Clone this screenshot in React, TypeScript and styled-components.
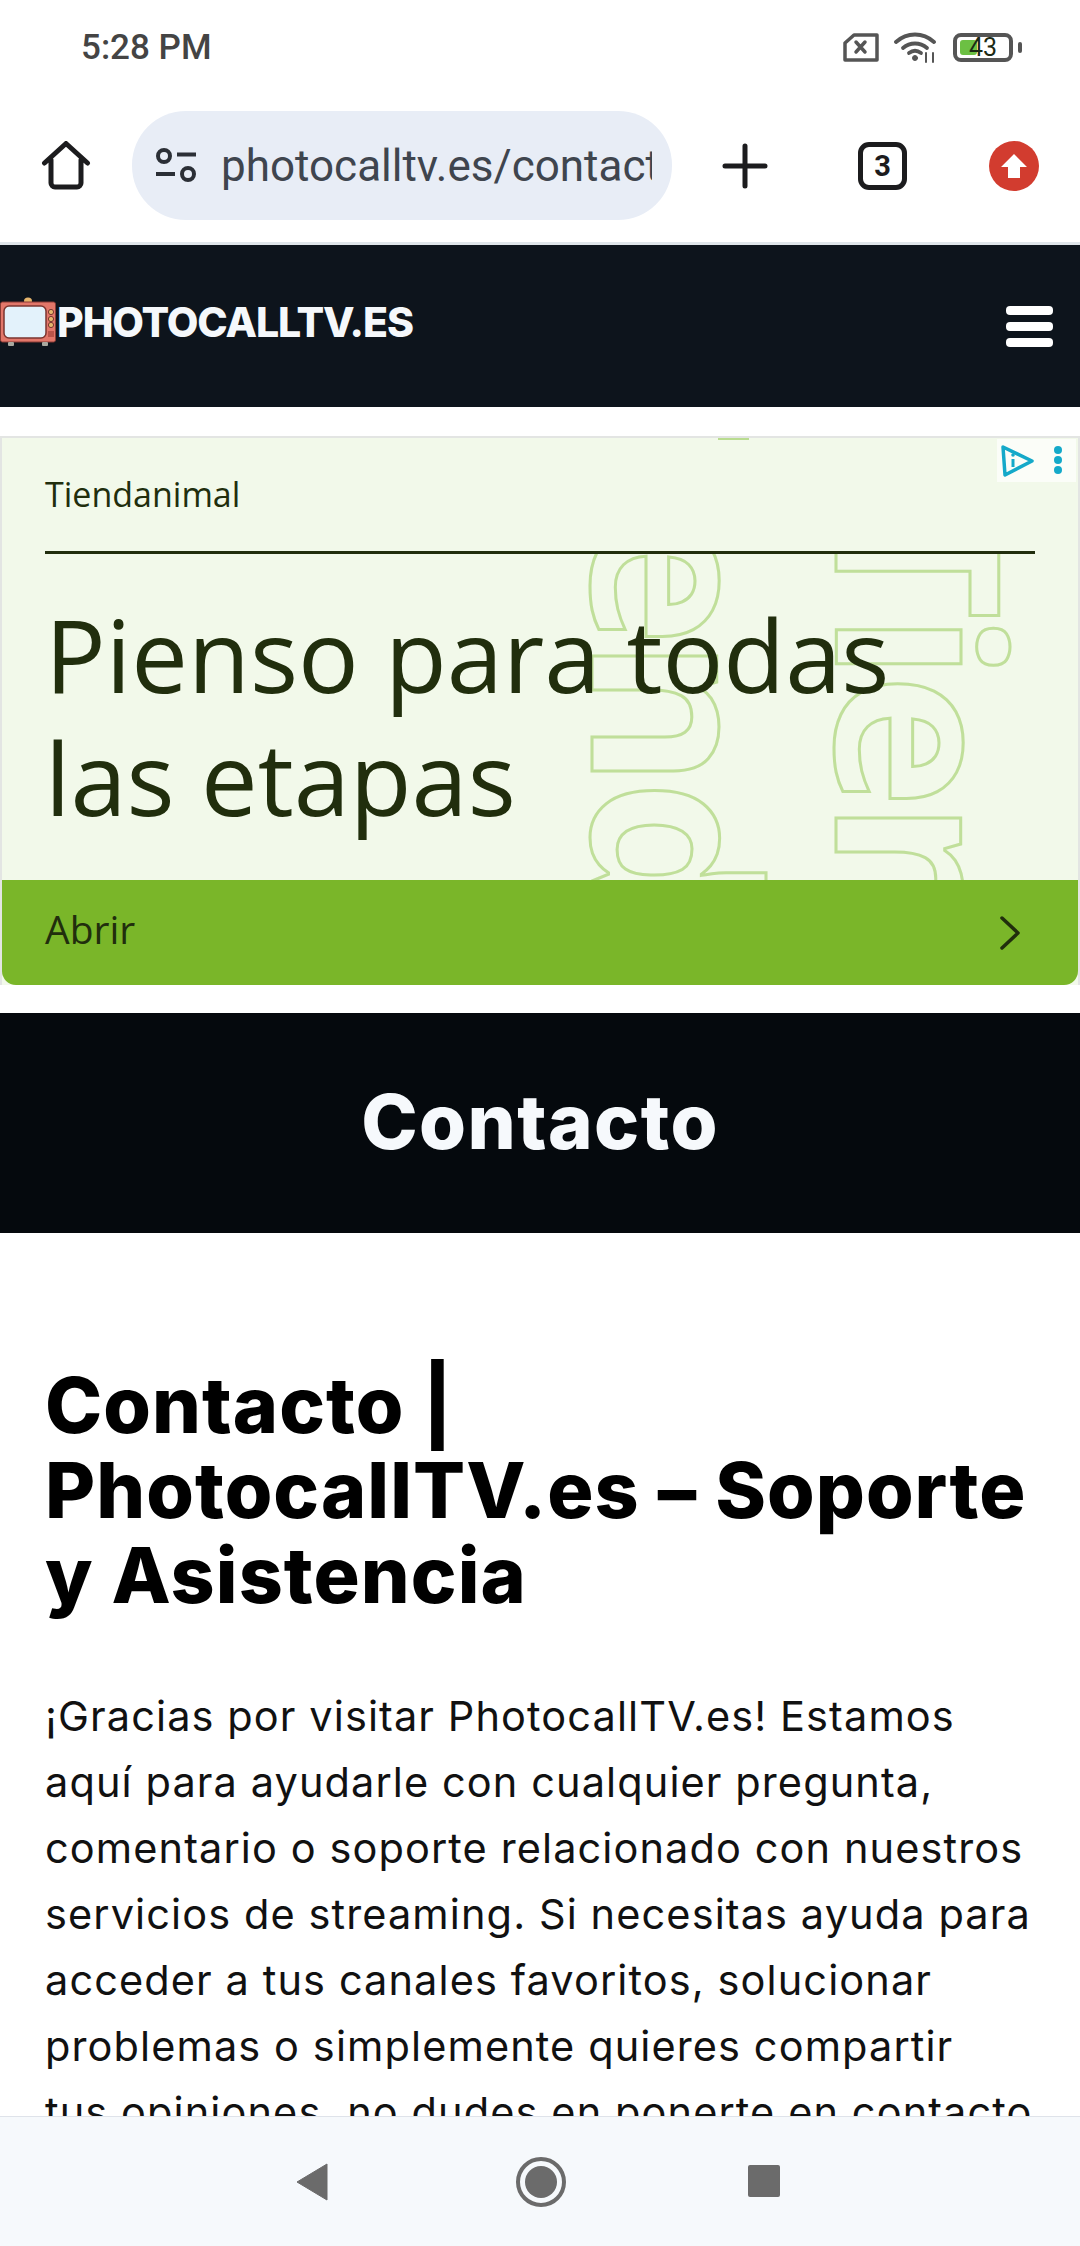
import styled, { createGlobalStyle } from 'styled-components';

const GlobalStyle = createGlobalStyle`
  html, body {
    margin: 0;
    padding: 0;
    background: #fff;
  }
  * {
    box-sizing: border-box;
  }
`;

const Screen = styled.div`
  width: 1080px;
  height: 2246px;
  display: flex;
  flex-direction: column;
  overflow: hidden;
  background: #fff;
  font-family: Inter, 'Liberation Sans', sans-serif;
`;

const StatusBar = styled.div`
  height: 96px;
  flex: none;
  display: flex;
  align-items: flex-start;
  justify-content: space-between;
  padding: 30px 59px 0 81px;
`;

const Time = styled.span`
  font-family: Roboto, sans-serif;
  font-weight: 500;
  font-size: 35px;
  line-height: 36px;
  color: #444;
`;

const StatusIcons = styled.div`
  display: flex;
  align-items: center;
  gap: 15px;
  margin-top: 2px;
`;

const Battery = styled.div`
  position: relative;
  width: 60px;
  height: 29px;
  border: 4px solid #555;
  border-radius: 8px;
  font-family: Roboto, sans-serif;
  font-size: 25px;
  line-height: 21px;
  color: #1c2a14;
  text-align: right;
  padding-right: 12px;
  &::before {
    content: '';
    position: absolute;
    left: 3px;
    top: 3px;
    width: 17px;
    height: 15px;
    border-radius: 3px;
    background: #6cc043;
  }
  &::after {
    content: '';
    position: absolute;
    right: -13px;
    top: 5px;
    width: 4px;
    height: 11px;
    border-radius: 2px;
    background: #555;
  }
  span {
    position: relative;
  }
`;

const BatteryWrap = styled.div`
  margin-right: 8px;
`;

const BrowserBar = styled.div`
  height: 149px;
  flex: none;
  display: flex;
  align-items: flex-start;
  padding: 15px 42px 0 40px;
  border-bottom: 3px solid #dfe5ea;
`;

const HomeButton = styled.div`
  width: 52px;
  height: 50px;
  margin-top: 30px;
  flex: none;
`;

const UrlPill = styled.div`
  width: 540px;
  height: 109px;
  margin-left: 40px;
  flex: none;
  display: flex;
  align-items: center;
  padding: 0 20px 0 23px;
  gap: 24px;
  border-radius: 54px;
  background: #e8edf6;
`;

const UrlText = styled.div`
  flex: 1;
  min-width: 0;
  overflow: hidden;
  white-space: nowrap;
  font-family: Roboto, sans-serif;
  font-size: 44px;
  line-height: 56px;
  color: #3f454e;
`;

const PlusButton = styled.div`
  width: 46px;
  height: 46px;
  margin: 32px 0 0 50px;
  flex: none;
`;

const TabCount = styled.div`
  width: 49px;
  height: 48px;
  margin: 31px 0 0 90px;
  flex: none;
  display: flex;
  align-items: center;
  justify-content: center;
  border: 5px solid #1c1c1e;
  border-radius: 11px;
  font-family: Roboto, sans-serif;
  font-weight: 700;
  font-size: 29px;
  color: #1c1c1e;
`;

const UpdateBadge = styled.div`
  width: 50px;
  height: 50px;
  margin: 30px 0 0 82px;
  flex: none;
  display: flex;
  align-items: center;
  justify-content: center;
  border-radius: 50%;
  background: #d23c2f;
`;

const SiteHeader = styled.header`
  height: 162px;
  flex: none;
  display: flex;
  align-items: center;
  justify-content: space-between;
  padding: 0 27px 0 0;
  background: #0d141c;
`;

const Logo = styled.div`
  display: flex;
  align-items: center;
  margin-top: -8px;
`;

const LogoText = styled.span`
  font-weight: 800;
  font-size: 41px;
  line-height: 48px;
  letter-spacing: -1.1px;
  color: #f5f8fb;
`;

const Burger = styled.div`
  width: 47px;
  display: flex;
  flex-direction: column;
  gap: 7px;
  span {
    display: block;
    height: 9px;
    border-radius: 4px;
    background: #fff;
  }
`;

const Ad = styled.section`
  position: relative;
  height: 549px;
  margin-top: 29px;
  flex: none;
  display: flex;
  flex-direction: column;
  overflow: hidden;
  border: solid #e3e5e3;
  border-width: 2px 2px 0;
  background: #f2f9ea;
  font-family: 'Open Sans', sans-serif;
  color: #212e0d;
`;

const AdSource = styled.div`
  height: 116px;
  flex: none;
  margin: 0 43px 0 43px;
  border-bottom: 3px solid #212e0d;
  font-size: 34px;
  line-height: 46px;
  padding-top: 33px;
`;

const AdBody = styled.div`
  position: relative;
  flex: 1;
  overflow: hidden;
  padding: 39px 40px 0 43px;
`;

const Watermark = styled.span<{ $left: number; $top: number }>`
  position: absolute;
  left: ${(p) => p.$left}px;
  top: ${(p) => p.$top}px;
  writing-mode: vertical-rl;
  white-space: nowrap;
  font-weight: 700;
  font-size: 228px;
  line-height: 228px;
  letter-spacing: -8px;
  color: transparent;
  -webkit-text-stroke: 3px #c0df9a;
`;

const WatermarkTip = styled.span`
  position: absolute;
  left: 716px;
  top: 0;
  width: 31px;
  height: 2px;
  background: #b9dc90;
`;

const AdHeadline = styled.div`
  position: relative;
  font-size: 101px;
  line-height: 123px;
`;

const AdCta = styled.div`
  height: 105px;
  flex: none;
  display: flex;
  align-items: center;
  justify-content: space-between;
  padding: 0 58px 0 43px;
  border-radius: 0 0 14px 14px;
  background: #7ab629;
  font-size: 39px;
`;

const CtaLabel = styled.span`
  margin-top: -9px;
`;

const AdChoices = styled.div`
  position: absolute;
  right: 2px;
  top: 1px;
  width: 79px;
  height: 43px;
  display: flex;
  align-items: center;
  justify-content: center;
  background: #fbfdf8;
`;

const TitleBand = styled.div`
  height: 220px;
  margin-top: 28px;
  padding-bottom: 5px;
  flex: none;
  display: flex;
  align-items: center;
  justify-content: center;
  background: #05090d;
`;

const PageTitle = styled.h1`
  margin: 0;
  font-weight: 800;
  font-size: 76px;
  line-height: 90px;
  letter-spacing: 1.4px;
  color: #f6f9fc;
`;

const Article = styled.main`
  flex: 1;
  min-height: 0;
  overflow: hidden;
  padding: 130px 0 0 45px;
`;

const ArticleTitle = styled.h2`
  margin: 0 0 65px;
  font-weight: 800;
  font-size: 77px;
  line-height: 85px;
  letter-spacing: 1.05px;
  white-space: nowrap;
  color: #000;
`;

const Paragraph = styled.p`
  margin: 0;
  font-size: 41.5px;
  line-height: 66px;
  letter-spacing: 1.1px;
  white-space: nowrap;
  color: #111;
`;

const NavBar = styled.nav`
  height: 130px;
  flex: none;
  display: flex;
  align-items: flex-start;
  padding: 40px 0 0 296px;
  border-top: 1px solid #dfe3ea;
  background: #f6f9fc;
`;

const NavBack = styled.div`
  width: 32px;
  height: 38px;
  margin-top: 6px;
  flex: none;
`;

const NavHome = styled.div`
  width: 50px;
  height: 50px;
  margin-left: 188px;
  flex: none;
  display: flex;
  align-items: center;
  justify-content: center;
  border: 4px solid #6b6b6b;
  border-radius: 50%;
  &::before {
    content: '';
    width: 32px;
    height: 32px;
    border-radius: 50%;
    background: #6b6b6b;
  }
`;

const NavSquare = styled.div`
  width: 32px;
  height: 32px;
  margin: 8px 0 0 182px;
  flex: none;
  border-radius: 2px;
  background: #6b6b6b;
`;

function TvLogo() {
  return (
    <svg width="57" height="50" viewBox="0 0 57 50">
      <ellipse cx="28" cy="4" rx="4" ry="3.5" fill="#e6b56c" />
      <rect x="0.5" y="5" width="55" height="40" rx="2" fill="#e2776a" stroke="#8a3b34" />
      <rect x="4" y="9" width="42" height="32" rx="5" fill="#e3f2fb" stroke="#7b3630" strokeWidth="1.5" />
      <circle cx="51" cy="15" r="2.6" fill="#e6b56c" stroke="#7b3630" />
      <circle cx="51" cy="22" r="2.6" fill="#e6b56c" stroke="#7b3630" />
      <circle cx="51" cy="28" r="2.6" fill="#e6b56c" stroke="#7b3630" />
      <rect x="48" y="34" width="6" height="6" fill="#b9544a" />
      <rect x="8" y="45" width="6" height="4" rx="1" fill="#a9a9a0" />
      <rect x="42" y="45" width="6" height="4" rx="1" fill="#a9a9a0" />
    </svg>
  );
}

export default function App() {
  return (
    <Screen>
      <GlobalStyle />
      <StatusBar>
        <Time>5:28 PM</Time>
        <StatusIcons>
          <svg width="36" height="29" viewBox="0 0 36 29" fill="none" stroke="#555" strokeWidth="3.5" strokeLinejoin="round">
            <path d="M34 2H11L2 10v17h32z" />
            <path d="M13 9l9 10M22 9l-9 10" strokeLinecap="round" />
          </svg>
          <svg width="44" height="31" viewBox="0 0 44 31" fill="none" stroke="#555" strokeWidth="3.8" strokeLinecap="round">
            <path d="M2 10C13 0 29 0 40 10" />
            <path d="M9 16c7-6 17-6 24 0" />
            <path d="M15 21c4-3 8-3 12 0" />
            <circle cx="21" cy="26" r="2.5" fill="#555" strokeWidth="1" />
            <path d="M32 21v9M39 21v9" strokeWidth="2" />
          </svg>
          <BatteryWrap>
            <Battery>
              <span>43</span>
            </Battery>
          </BatteryWrap>
        </StatusIcons>
      </StatusBar>

      <BrowserBar>
        <HomeButton>
          <svg width="52" height="50" viewBox="0 0 52 50" fill="none" stroke="#1c1c1e" strokeWidth="5" strokeLinejoin="round" strokeLinecap="round">
            <path d="M4.500 22L26 2.500 47.500 22M11 19v23a4 4 0 0 0 4 4h22a4 4 0 0 0 4-4V19" />
          </svg>
        </HomeButton>
        <UrlPill>
          <svg width="42" height="35" viewBox="0 0 42 35" fill="none" stroke="#2b2f36" strokeWidth="4">
            <circle cx="9" cy="8" r="6" />
            <path d="M22 6.500h19M1 26h19" />
            <circle cx="33" cy="26" r="6" />
          </svg>
          <UrlText>photocalltv.es/contact</UrlText>
        </UrlPill>
        <PlusButton>
          <svg width="46" height="46" viewBox="0 0 46 46" stroke="#1c1c1e" strokeWidth="5" strokeLinecap="round">
            <path d="M23 3v40M3 23h40" />
          </svg>
        </PlusButton>
        <TabCount>3</TabCount>
        <UpdateBadge>
          <svg width="28" height="30" viewBox="0 0 28 30" fill="#fff">
            <path d="M14 3L27 16h-7v11H8V16H1z" />
          </svg>
        </UpdateBadge>
      </BrowserBar>

      <SiteHeader>
        <Logo>
          <TvLogo />
          <LogoText>PHOTOCALLTV.ES</LogoText>
        </Logo>
        <Burger>
          <span />
          <span />
          <span />
        </Burger>
      </SiteHeader>

      <Ad>
        <AdSource>Tiendanimal</AdSource>
        <AdBody>
          <Watermark $left={564} $top={-228}>Tiend</Watermark>
          <Watermark $left={808} $top={-66}>Tien</Watermark>
          <AdHeadline>
            Pienso para todas
            <br />
            las etapas
          </AdHeadline>
        </AdBody>
        <WatermarkTip />
        <AdCta>
          <CtaLabel>Abrir</CtaLabel>
          <svg width="20" height="34" viewBox="0 0 20 34" fill="none" stroke="#212e0d" strokeWidth="3.5" strokeLinecap="round" strokeLinejoin="round">
            <path d="M2 2l16 15L2 32" />
          </svg>
        </AdCta>
        <AdChoices>
          <svg width="72" height="32" viewBox="0 0 72 32" fill="none">
            <path d="M2 2l29 14L4 30z" stroke="#14a9c9" strokeWidth="3.500" strokeLinejoin="round" />
            <path d="M12 14v8" stroke="#14a9c9" strokeWidth="3" />
            <circle cx="12" cy="10" r="1.800" fill="#14a9c9" />
            <circle cx="57" cy="5" r="4" fill="#14a9c9" />
            <circle cx="57" cy="15" r="4" fill="#14a9c9" />
            <circle cx="57" cy="25" r="4" fill="#14a9c9" />
          </svg>
        </AdChoices>
      </Ad>

      <TitleBand>
        <PageTitle>Contacto</PageTitle>
      </TitleBand>

      <Article>
        <ArticleTitle>
          Contacto |
          <br />
          PhotocallTV.es – Soporte
          <br />
          y Asistencia
        </ArticleTitle>
        <Paragraph>
          ¡Gracias por visitar PhotocallTV.es! Estamos
          <br />
          aquí para ayudarle con cualquier pregunta,
          <br />
          comentario o soporte relacionado con nuestros
          <br />
          servicios de streaming. Si necesitas ayuda para
          <br />
          acceder a tus canales favoritos, solucionar
          <br />
          problemas o simplemente quieres compartir
          <br />
          tus opiniones, no dudes en ponerte en contacto
          <br />
          con nosotros.
        </Paragraph>
      </Article>

      <NavBar>
        <NavBack>
          <svg width="32" height="38" viewBox="0 0 32 38" fill="#6b6b6b">
            <path d="M31 1v36L1 19z" stroke="#6b6b6b" strokeLinejoin="round" />
          </svg>
        </NavBack>
        <NavHome />
        <NavSquare />
      </NavBar>
    </Screen>
  );
}
